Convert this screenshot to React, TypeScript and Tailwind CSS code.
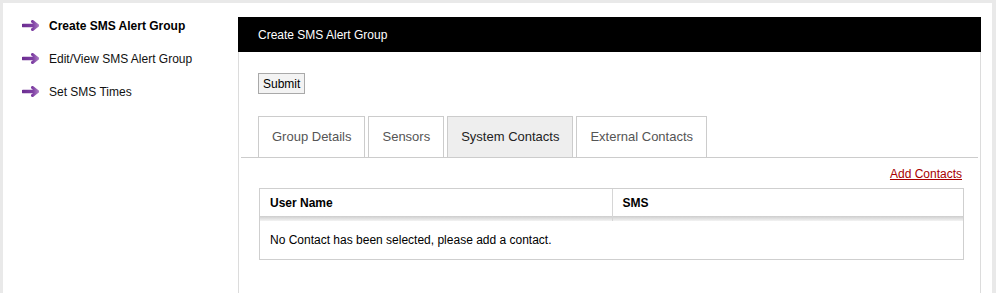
import React from "react";

function Arrow() {
  return (
    <svg width="18" height="11" viewBox="0 0 18 11" className="shrink-0">
      <defs>
        <linearGradient id="ag" gradientUnits="userSpaceOnUse" x1="0" y1="0" x2="18" y2="0">
          <stop offset="0" stopColor="#6b2d90" />
          <stop offset="0.6" stopColor="#7e3fa3" />
          <stop offset="1" stopColor="#b48ac9" />
        </linearGradient>
      </defs>
      <path d="M1 5.5 H15" stroke="url(#ag)" strokeWidth="3.4" strokeLinecap="round" fill="none" />
      <path d="M10.5 1.5 L15.5 5.5 L10.5 9.5" stroke="url(#ag)" strokeWidth="3" strokeLinecap="round" strokeLinejoin="round" fill="none" />
    </svg>
  );
}

const sideItems = [
  { label: "Create SMS Alert Group", bold: true },
  { label: "Edit/View SMS Alert Group", bold: false },
  { label: "Set SMS Times", bold: false },
];

const tabs = ["Group Details", "Sensors", "System Contacts", "External Contacts"];

export default function App() {
  return (
    <div className="h-[293px] overflow-hidden bg-[#e9e9e9] pt-[3px] pl-[3px] pr-[4px] font-['Liberation_Sans',Arial,sans-serif] text-[12px] text-black">
      <div className="flex h-[290px] bg-white">
        <div className="w-[235px] shrink-0 pl-[19px] pt-[6px]">
          {sideItems.map((it) => (
            <div key={it.label} className="flex h-[33px] items-center gap-[9px]">
              <Arrow />
              <span className={it.bold ? "font-bold text-black" : "text-[#111]"}>{it.label}</span>
            </div>
          ))}
        </div>
        <div className="mt-[14px] mr-[11px] flex flex-1 flex-col">
          <div className="flex h-[35px] items-center bg-black pl-[20px] text-white">Create SMS Alert Group</div>
          <div className="flex-1 border-x border-[#dcdcdc]">
            <div className="pl-[19px] pt-[21px]">
              <button className="h-[21px] border border-[#a9a9a9] bg-[#f3f3f3] px-[4px] text-[12px] leading-none text-black">
                Submit
              </button>
            </div>
            <div className="mx-[2px] mt-[22px] flex gap-[3px] border-b border-[#cccccc] pl-[17px]">
              {tabs.map((t) => {
                const active = t === "System Contacts";
                return (
                  <div
                    key={t}
                    className={
                      "flex h-[41px] items-center border border-b-0 border-[#cccccc] px-[13px] text-[13px] " +
                      (active ? "bg-[#eeeeee] text-[#222]" : "bg-white text-[#555]")
                    }
                  >
                    {t}
                  </div>
                );
              })}
            </div>
            <div className="ml-[20px] w-[705px]">
              <div className="pt-[9px] pr-[2px] text-right leading-[14px]">
                <a href="#" className="text-[#a80000] underline">
                  Add Contacts
                </a>
              </div>
              <div className="mt-[7px] border border-[#cfcfcf]">
                <div className="flex font-bold">
                  <div className="flex h-[32px] w-1/2 flex-col bg-[linear-gradient(to_bottom,#ffffff_0px,#ffffff_27px,#cdcdcd_27px,#f3f3f3_32px)] pl-[10px]">
                    <div className="flex h-[27px] items-center">User Name</div>
                  </div>
                  <div className="flex h-[32px] w-1/2 flex-col border-l border-[#d6d6d6] bg-[linear-gradient(to_bottom,#ffffff_0px,#ffffff_27px,#cdcdcd_27px,#f3f3f3_32px)] pl-[10px]">
                    <div className="flex h-[27px] items-center">SMS</div>
                  </div>
                </div>
                <div className="flex h-[38px] items-center pl-[10px]">
                  No Contact has been selected, please add a contact.
                </div>
              </div>
            </div>
          </div>
        </div>
      </div>
    </div>
  );
}
